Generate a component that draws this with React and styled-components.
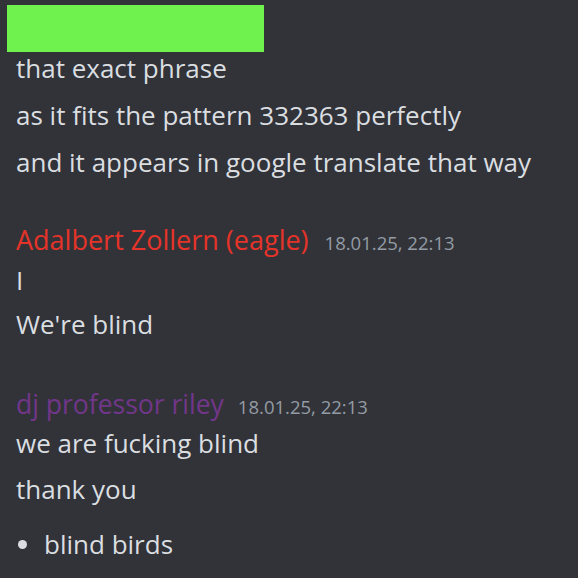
import React from 'react';
import styled, { createGlobalStyle } from 'styled-components';

const GlobalStyle = createGlobalStyle`
  html, body {
    margin: 0;
    padding: 0;
    background: #313338;
  }
  body {
    font-family: "Open Sans", "Noto Sans", sans-serif;
    color: #dbdee1;
  }
`;

const Chat = styled.div`
  width: 578px;
  height: 578px;
  overflow: hidden;
  background: #313338;
  padding: 5px 0 0 0;
  box-sizing: border-box;
`;

const Redacted = styled.div`
  width: 257px;
  height: 47px;
  margin-left: 7px;
  background: #70f24e;
`;

const Group = styled.div`
  padding-left: 16px;
  margin-top: ${p => p.gap || 0}px;
`;

const Header = styled.div`
  display: flex;
  align-items: baseline;
  gap: ${p => p.gap || 16}px;
  height: 40px;
  line-height: 40px;
`;

const Name = styled.span`
  font-size: ${p => p.size || 27}px;
  color: ${p => p.color};
  font-weight: 500;
`;

const Time = styled.span`
  font-size: 18.5px;
  color: #949ba4;
`;

const Line = styled.div`
  font-size: 26px;
  height: ${p => p.h || 47}px;
  line-height: ${p => p.h || 47}px;
  white-space: nowrap;
`;

const Bullet = styled.div`
  display: flex;
  align-items: center;
  gap: 17px;
  font-size: 26px;
  height: 54px;
  line-height: 54px;
  &::before {
    content: '';
    width: 9px;
    height: 9px;
    border-radius: 50%;
    background: #dbdee1;
    margin-left: 2px;
  }
`;

export default function App() {
  return (
    <Chat>
      <GlobalStyle />
      <Redacted />
      <Group gap={-7}>
        <Line>that exact phrase</Line>
        <Line>as it fits the pattern 332363 perfectly</Line>
        <Line>and it appears in google translate that way</Line>
      </Group>
      <Group gap={34}>
        <Header>
          <Name color="#e5332a">Adalbert Zollern (eagle)</Name>
          <Time>18.01.25, 22:13</Time>
        </Header>
        <Line h={41}>I</Line>
        <Line>We're blind</Line>
      </Group>
      <Group gap={36}>
        <Header gap={14}>
          <Name color="#71368a" size={26.5}>dj professor riley</Name>
          <Time>18.01.25, 22:13</Time>
        </Header>
        <Line h={38}>we are fucking blind</Line>
        <Line h={55}>thank you</Line>
        <Bullet>blind birds</Bullet>
      </Group>
    </Chat>
  );
}
